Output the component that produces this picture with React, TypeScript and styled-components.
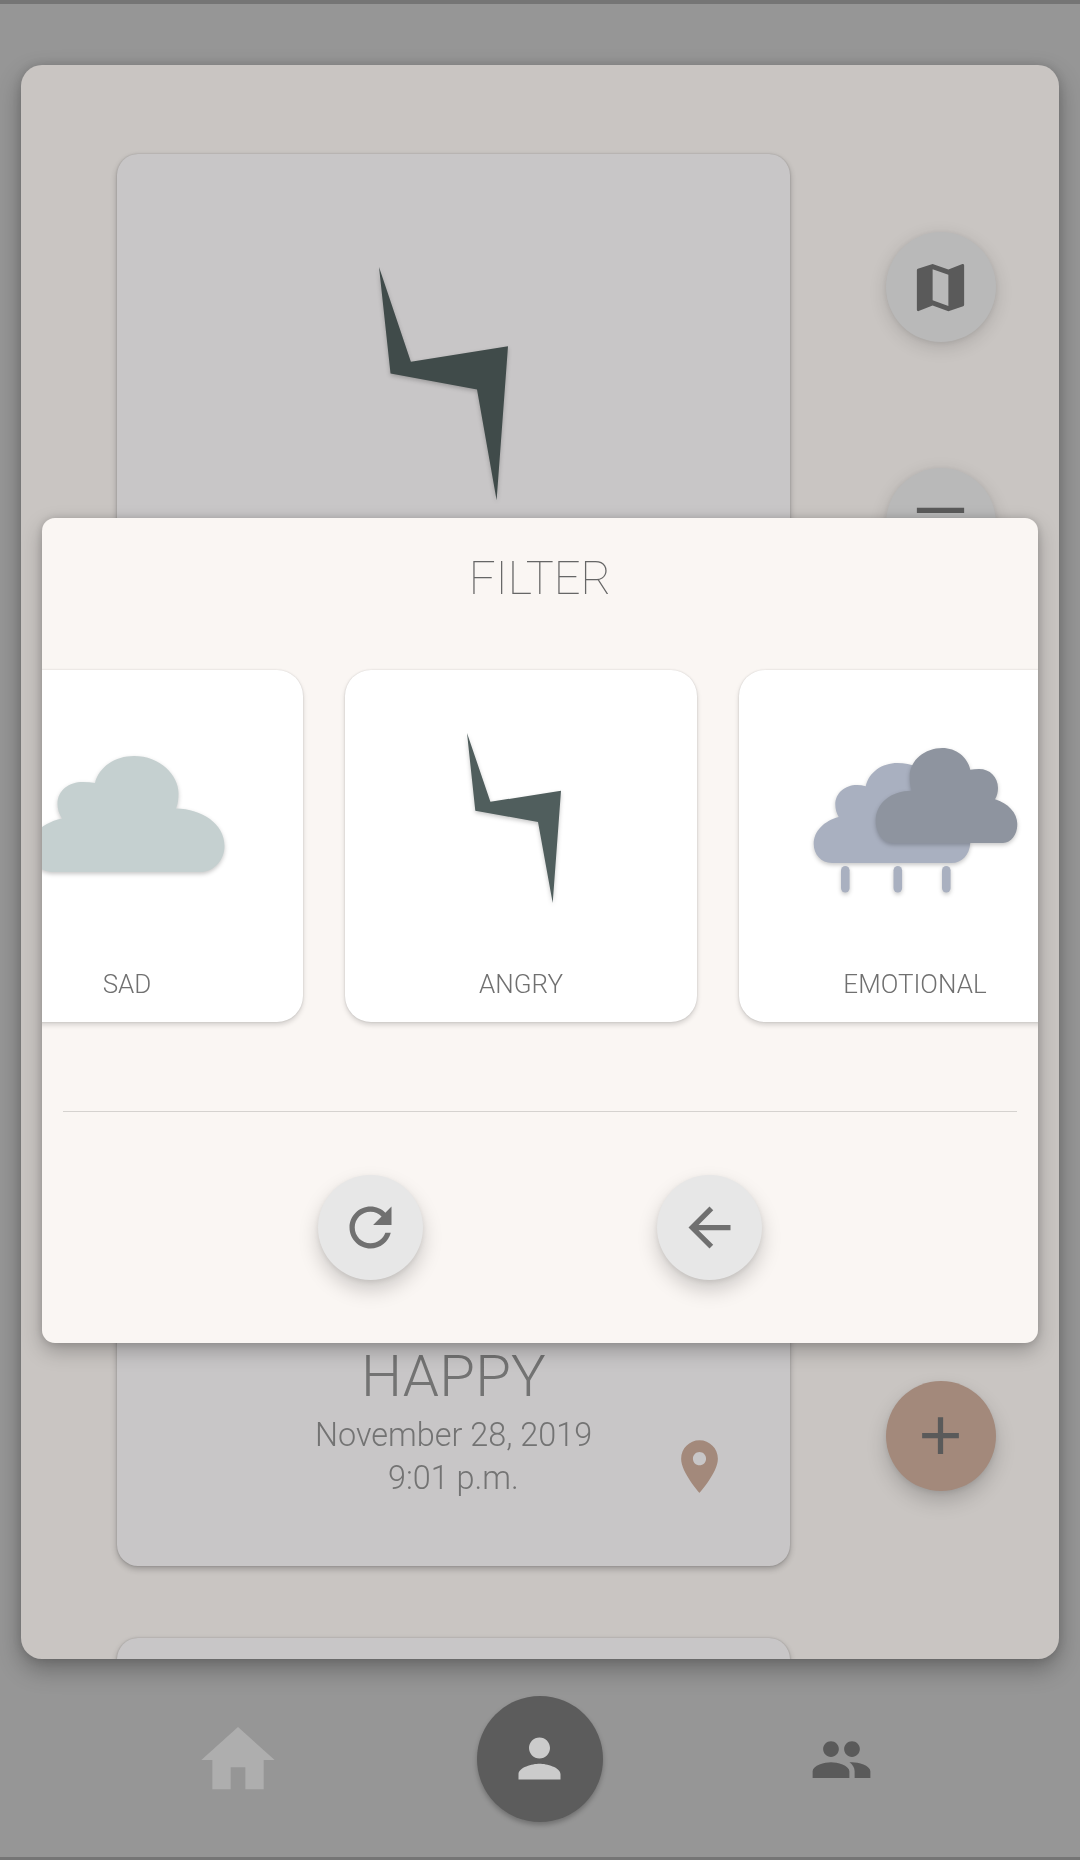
import React from "react";
import styled, { createGlobalStyle } from "styled-components";

const GlobalStyle = createGlobalStyle`
  * { box-sizing: border-box; }
  body { margin: 0; font-family: Roboto, "Liberation Sans", sans-serif; }
  button { border: 0; padding: 0; font: inherit; }
  svg { display: block; flex: none; }
`;

const Screen = styled.div`
  position: relative;
  display: flex;
  flex-direction: column;
  width: 1080px;
  height: 1860px;
  padding: 61px 21px 0;
  overflow: hidden;
  background: #969696;
  border-top: 4px solid #757575;
  border-bottom: 3px solid #757575;
`;

const Journal = styled.main`
  flex: none;
  display: flex;
  justify-content: space-between;
  height: 1594px;
  padding: 89px 63.5px 0 96px;
  border-radius: 21px;
  background: #c9c5c2;
  box-shadow: 0 10px 24px rgba(0, 0, 0, 0.3), 0 0 10px rgba(0, 0, 0, 0.12);
`;

const Entries = styled.section`
  display: flex;
  flex-direction: column;
  gap: 72px;
  height: 1505px;
  margin: 0 -20px;
  padding: 0 20px;
  clip-path: inset(-10px 0 0 0);
`;

const Entry = styled.article`
  position: relative;
  flex: none;
  display: flex;
  flex-direction: column;
  align-items: center;
  width: 673px;
  height: 670px;
  border-radius: 21px;
  background: #c8c6c7;
  color: #737373;
  font-weight: 300;
  box-shadow: 0 3px 6px rgba(0, 0, 0, 0.24), 0 0 2px rgba(0, 0, 0, 0.2);
`;

const EntryArt = styled.div`
  flex: none;
  height: 446px;
`;

const Mood = styled.h2`
  margin: 0 0 4px;
  font-size: 58px;
  font-weight: 300;
  line-height: 68px;
  letter-spacing: 0.2px;
  will-change: transform;
`;

const When = styled.div`
  font-size: 32.4px;
  line-height: 43px;
  will-change: transform;
`;

const PinBadge = styled.div`
  position: absolute;
  right: 59px;
  bottom: 68px;
  color: #a3897b;
`;

const Actions = styled.aside`
  display: flex;
  flex-direction: column;
  gap: 126px;
  height: 1337px;
  padding-top: 78px;
`;

const RoundButton = styled.button<{ $size: number; $bg: string; $fg: string; $lift?: boolean; $last?: boolean }>`
  flex: none;
  display: flex;
  align-items: center;
  justify-content: center;
  width: ${(p) => p.$size}px;
  height: ${(p) => p.$size}px;
  margin-top: ${(p) => (p.$last ? "auto" : "0")};
  padding-bottom: ${(p) => (p.$last ? "1px" : "0")};
  border-radius: 50%;
  background: ${(p) => p.$bg};
  color: ${(p) => p.$fg};
  box-shadow: ${(p) =>
    p.$lift
      ? "0 10px 20px rgba(0, 0, 0, 0.18), 0 2px 5px rgba(0, 0, 0, 0.08)"
      : "0 5px 18px rgba(0, 0, 0, 0.14), 0 1px 5px rgba(0, 0, 0, 0.07)"};
`;

const NavBar = styled.nav`
  display: grid;
  grid-template-columns: repeat(3, 302px);
  justify-content: center;
  justify-items: center;
  align-items: center;
  height: 201px;
  padding-top: 1px;
`;

const NavItem = styled.div<{ $color: string; $active?: boolean }>`
  display: flex;
  align-items: center;
  justify-content: center;
  width: 126px;
  height: 126px;
  padding: ${(p) => (p.$active ? "0 1px 0 0" : "2px 1px 0 0")};
  border-radius: 50%;
  color: ${(p) => p.$color};
  background: ${(p) => (p.$active ? "#5c5c5c" : "transparent")};
  box-shadow: ${(p) => (p.$active ? "0 3px 5px rgba(0, 0, 0, 0.25)" : "none")};
`;

const Overlay = styled.div`
  position: absolute;
  inset: -4px 0 -3px;
  display: flex;
  align-items: center;
  justify-content: center;
`;

const Dialog = styled.div`
  width: 996px;
  height: 825px;
  padding-top: 32px;
  overflow: hidden;
  border-radius: 13px;
  background: #faf6f3;
  box-shadow: 0 8px 20px rgba(0, 0, 0, 0.25), 0 0 8px rgba(0, 0, 0, 0.15);
`;

const DialogTitle = styled.h1`
  margin: 0;
  font-size: 47px;
  font-weight: 100;
  line-height: 56px;
  text-align: center;
  color: #666;
  will-change: transform;
`;

const MoodStrip = styled.div`
  display: flex;
  gap: 42px;
  margin: 64px 0 89px -91px;
`;

const MoodCard = styled.div`
  flex: none;
  width: 352px;
  height: 352px;
  border-radius: 26px;
  background: #fff;
  box-shadow: 0 3px 5px rgba(0, 0, 0, 0.15), 0 0 2px rgba(0, 0, 0, 0.15);
`;

const MoodName = styled.div`
  padding-top: 1px;
  font-size: 26px;
  font-weight: 300;
  line-height: 31px;
  text-align: center;
  color: #707070;
  will-change: transform;
`;

const Divider = styled.hr`
  height: 1px;
  margin: 0 21px 63px;
  border: 0;
  background: #d5d2cf;
`;

const DialogButtons = styled.div`
  display: flex;
  gap: 234px;
  padding-left: 276px;
`;

const Shaded = styled.g`
  filter: drop-shadow(0 2px 2px rgba(0, 0, 0, 0.22));
`;

const ICONS = {
  map: "M20.5 3l-.16.03L15 5.1 9 3 3.36 4.9c-.21.07-.36.25-.36.48V20.5c0 .28.22.5.5.5l.16-.03L9 18.9l6 2.1 5.64-1.9c.21-.07.36-.25.36-.48V3.5c0-.28-.22-.5-.5-.5zM15 19l-6-2.11V5l6 2.11V19z",
  filter: "M3 6v2h18V6H3zm3 5v2h12v-2H6zm4 5v2h4v-2h-4z",
  add: "M19 13h-6v6h-2v-6H5v-2h6V5h2v6h6v2z",
  refresh:
    "M17.65 6.35C16.2 4.9 14.21 4 12 4c-4.42 0-7.99 3.58-7.99 8s3.57 8 7.99 8c3.73 0 6.84-2.55 7.73-6h-2.08c-.82 2.33-3.04 4-5.65 4-3.31 0-6-2.69-6-6s2.69-6 6-6c1.66 0 3.14.69 4.22 1.78L13 11h7V4l-2.35 2.35z",
  back: "M20 11H7.83l5.59-5.59L12 4l-8 8 8 8 1.41-1.41L7.83 13H20v-2z",
  pin: "M12 2C8.13 2 5 5.13 5 9c0 5.25 7 13 7 13s7-7.75 7-13c0-3.87-3.13-7-7-7zm0 9.5c-1.38 0-2.5-1.12-2.5-2.5s1.12-2.5 2.5-2.5 2.5 1.12 2.5 2.5-1.12 2.5-2.5 2.5z",
  home: "M10 20v-6h4v6h5v-8h3L12 3 2 12h3v8z",
  person: "M12 12c2.21 0 4-1.79 4-4s-1.79-4-4-4-4 1.79-4 4 1.79 4 4 4zm0 2c-2.67 0-8 1.34-8 4v2h16v-2c0-2.66-5.33-4-8-4z",
  people:
    "M16 11c1.66 0 2.99-1.34 2.99-3S17.66 5 16 5c-1.66 0-3 1.34-3 3s1.34 3 3 3zm-8 0c1.66 0 2.99-1.34 2.99-3S9.66 5 8 5C6.34 5 5 6.34 5 8s1.34 3 3 3zm0 2c-2.33 0-7 1.17-7 3.5V19h14v-2.5c0-2.33-4.67-3.5-7-3.5zm8 0c-.29 0-.62.02-.97.05 1.16.84 1.97 1.97 1.97 3.45V19h6v-2.5c0-2.33-4.67-3.5-7-3.5z",
};

const Icon = ({ name, size = 63 }: { name: keyof typeof ICONS; size?: number }) => (
  <svg width={size} height={size} viewBox="0 0 24 24" fill="currentColor" aria-hidden>
    <path d={ICONS[name]} />
  </svg>
);

const SadArt = () => (
  <svg width="352" height="298" viewBox="-49 670 352 298">
    <Shaded>
      <path
        fill="#c5d0d0"
        d="M51 872C36 870 28 858 29 847C30 835 44 822 62 818.6C59 814 57.5 809 57.5 804C57.5 790 69 782 83 782Q90 782 95 783C99 767 115 756 134 756C160 756 178.5 775 178.5 793C178.5 799 178 804 176 808.6C202 809 224.5 824 224.5 846C224.5 862 212 872 201 872Z"
      />
    </Shaded>
  </svg>
);

const AngryArt = () => (
  <svg width="352" height="298" viewBox="345 670 352 298">
    <Shaded>
      <path fill="#505e5d" d="M467 733L490.4 801.8L561 790.7L552.7 903L538 822.1L475.3 810.7Z" />
    </Shaded>
  </svg>
);

const EmotionalArt = () => (
  <svg width="352" height="298" viewBox="739 670 352 298">
    <Shaded>
      <path
        fill="#a9b0c0"
        d="M832 863C821 863 813.7 854 813.7 844C813.7 831 824 821 838.7 817C836.5 813 835.3 809 835.3 804.5C835.3 793 845 785 857 785Q861.5 785 865.7 786.3C869 772 882 763 897.5 763C925 763 950 785 950 812L970.3 843C969.5 855 962 863 951.5 863Z"
      />
      {[841, 893.5, 942].map((x) => (
        <rect key={x} x={x} y="866" width="8.6" height="26.4" rx="4.3" fill="#a9b0c0" />
      ))}
    </Shaded>
    <Shaded>
      <path
        fill="#8e949f"
        d="M893 843C882 843 875.7 832 875.7 821C875.7 803 891 790.7 911.7 790.7C910 786 909.6 781 909.7 776C910 760 925 748 942.3 748C956 748 967.5 757 970.3 769.7Q974 769 979 769C990 769 998 777 998 788Q998 794.5 995 799.3C1008 803 1017.3 813 1017.3 824.3C1017.3 835 1011 843 1003 843Z"
      />
    </Shaded>
  </svg>
);

const MOODS = [
  { name: "SAD", Art: SadArt },
  { name: "ANGRY", Art: AngryArt },
  { name: "EMOTIONAL", Art: EmotionalArt },
];

export default function App() {
  return (
    <>
      <GlobalStyle />
      <Screen>
        <Journal>
          <Entries>
            <Entry>
              <EntryArt>
                <svg width="673" height="446" viewBox="117 154 673 446">
                  <Shaded>
                    <path fill="#404b4a" d="M379 267L410.9 361.7L508 346.2L496.6 500.3L477 389.4L390.5 373.6Z" />
                  </Shaded>
                </svg>
              </EntryArt>
            </Entry>
            <Entry>
              <EntryArt />
              <Mood>HAPPY</Mood>
              <When>November 28, 2019</When>
              <When>9:01 p.m.</When>
              <PinBadge>
                <Icon name="pin" />
              </PinBadge>
            </Entry>
            <Entry />
          </Entries>
          <Actions>
            <RoundButton $size={110} $bg="#b9b9b9" $fg="#5a5a5a" aria-label="Map">
              <Icon name="map" />
            </RoundButton>
            <RoundButton $size={110} $bg="#b9b9b9" $fg="#5a5a5a" aria-label="Filter">
              <Icon name="filter" />
            </RoundButton>
            <RoundButton $size={110} $bg="#a3897b" $fg="#5a5a5a" $lift $last aria-label="Add">
              <Icon name="add" />
            </RoundButton>
          </Actions>
        </Journal>
        <NavBar>
          <NavItem $color="#aeaeae">
            <Icon name="home" size={88} />
          </NavItem>
          <NavItem $color="#cbcbcb" $active>
            <Icon name="person" />
          </NavItem>
          <NavItem $color="#5a5a5a">
            <Icon name="people" />
          </NavItem>
        </NavBar>
        <Overlay>
          <Dialog>
            <DialogTitle>FILTER</DialogTitle>
            <MoodStrip>
              {MOODS.map(({ name, Art }) => (
                <MoodCard key={name}>
                  <Art />
                  <MoodName>{name}</MoodName>
                </MoodCard>
              ))}
            </MoodStrip>
            <Divider />
            <DialogButtons>
              <RoundButton $size={105} $bg="#e7e7e7" $fg="#707070" $lift aria-label="Reset">
                <Icon name="refresh" />
              </RoundButton>
              <RoundButton $size={105} $bg="#e7e7e7" $fg="#707070" $lift aria-label="Back">
                <Icon name="back" />
              </RoundButton>
            </DialogButtons>
          </Dialog>
        </Overlay>
      </Screen>
    </>
  );
}
